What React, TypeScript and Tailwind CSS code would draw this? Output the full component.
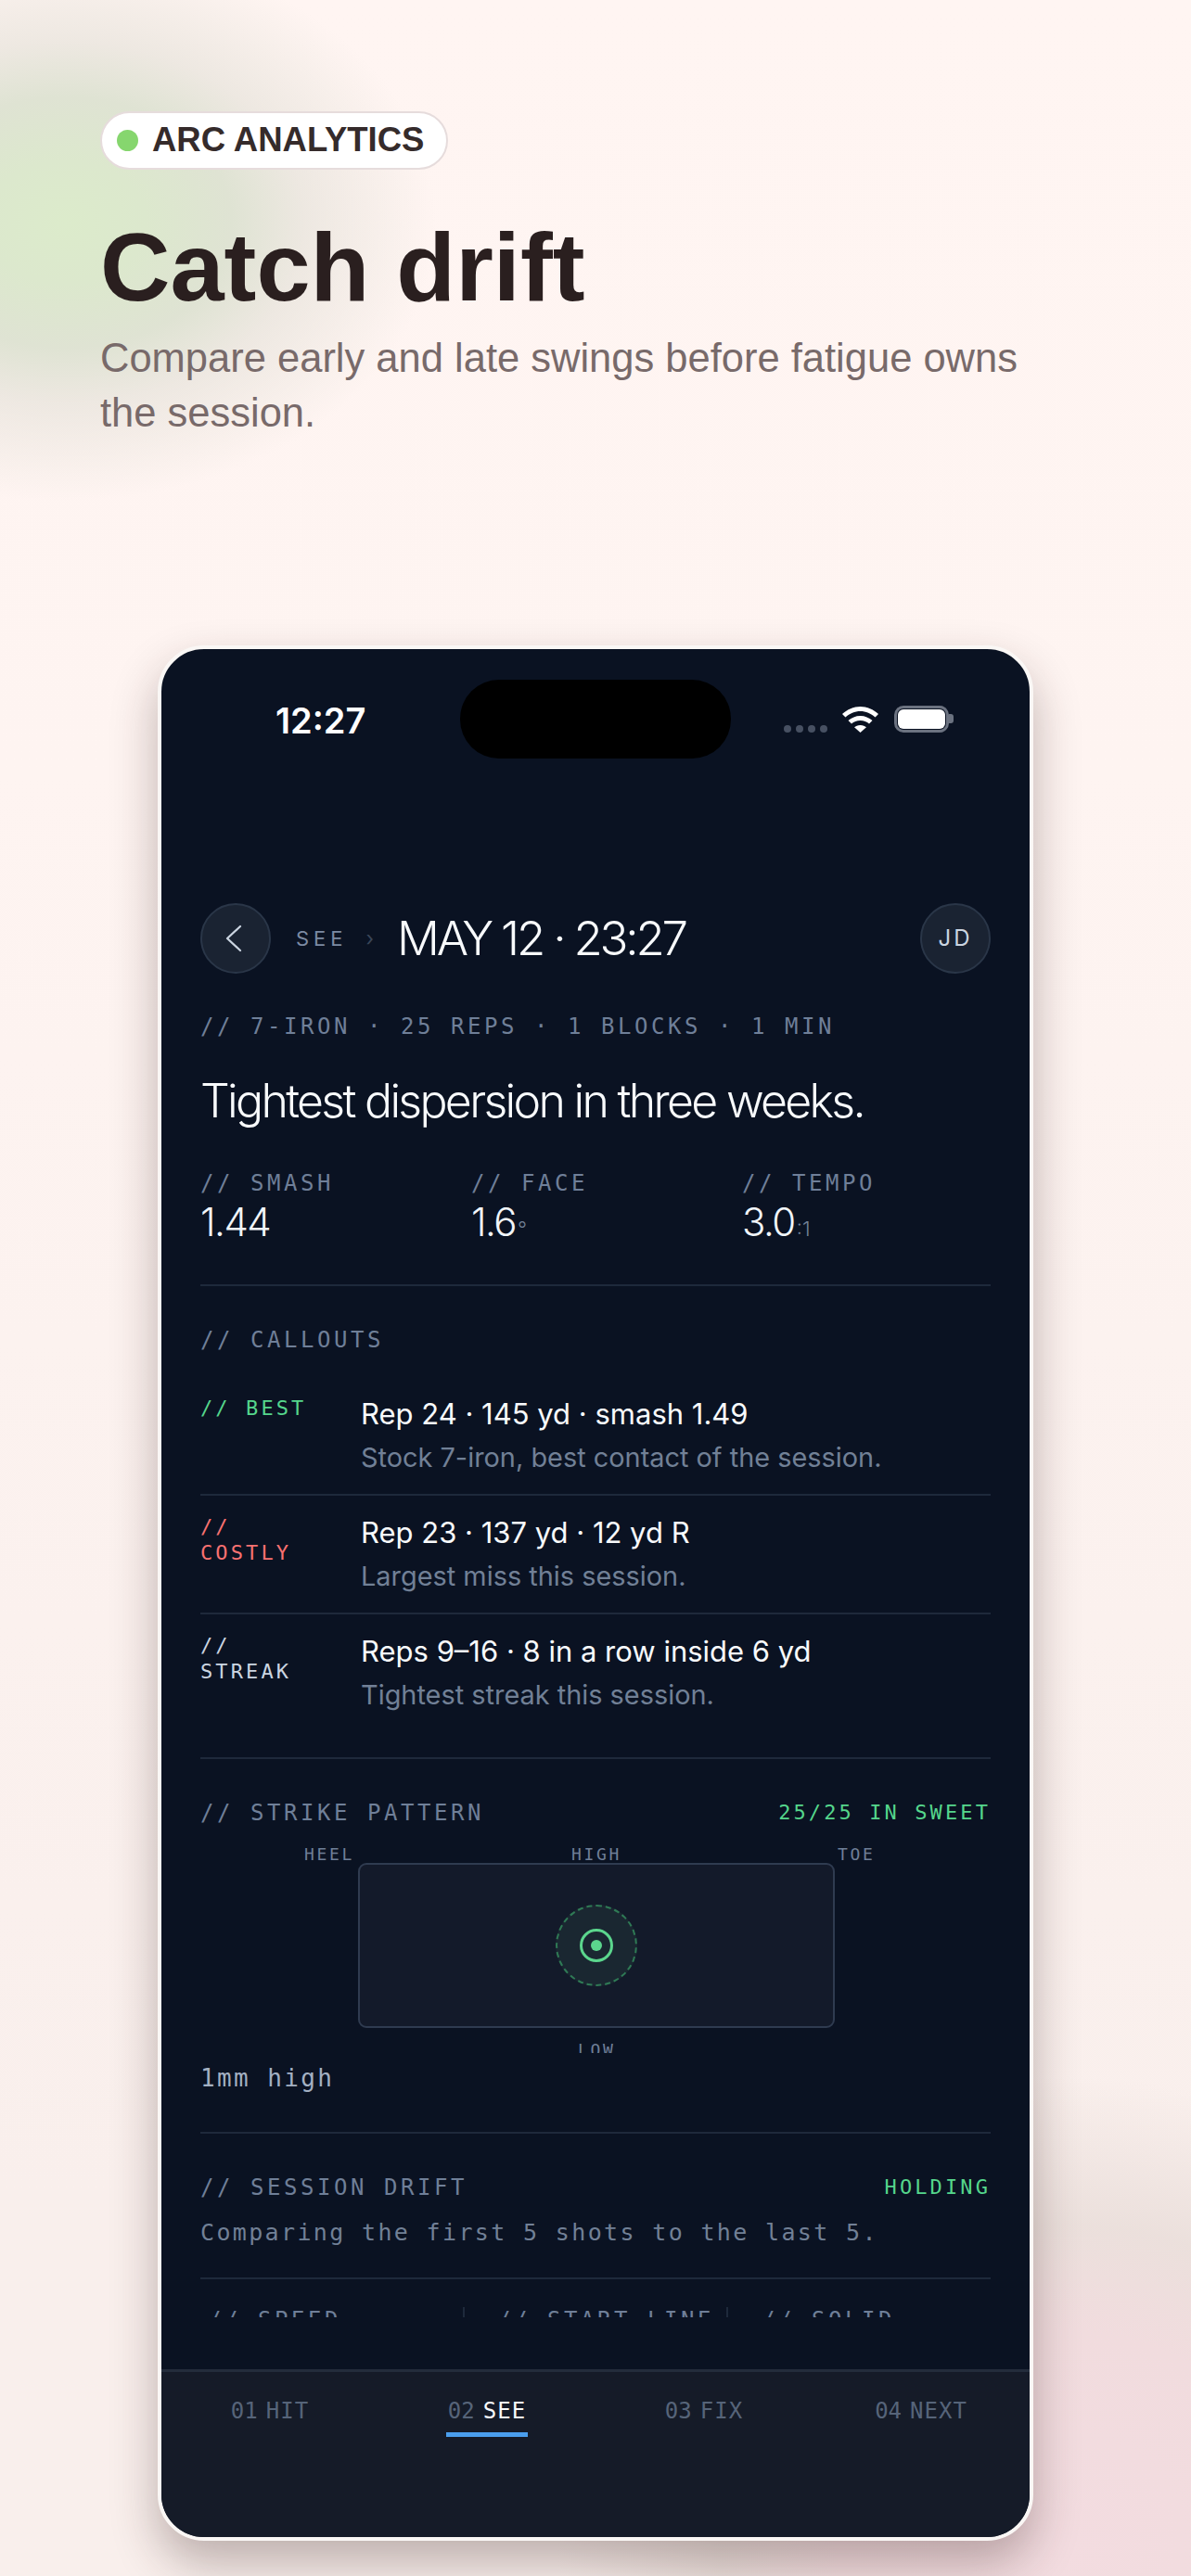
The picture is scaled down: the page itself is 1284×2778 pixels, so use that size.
import React from "react";

const mono = "font-['DejaVu_Sans_Mono',monospace]";
const inter = "font-['Inter',sans-serif]";

function Label({ children, className = "text-[#6f7f98]" }: { children: React.ReactNode; className?: string }) {
  return <div className={`${mono} h-[30px] text-[24px] leading-[34px] tracking-[3.55px] ${className}`}>{children}</div>;
}

function Accent({ children }: { children: React.ReactNode }) {
  return <div className={`${mono} h-[30px] text-[22px] leading-[34px] tracking-[3.1px] text-[#55d68c]`}>{children}</div>;
}

function Stat({ label, value, unit }: { label: string; value: string; unit?: string }) {
  return (
    <div>
      <Label>{label}</Label>
      <div className={`${inter} mt-[4px] text-[42px] leading-[50px] font-light tracking-[-1.5px] text-[#f1f5f9]`}>
        {value}
        {unit && <span className="ml-[2px] text-[22px] leading-none tracking-normal text-[#718096]">{unit}</span>}
      </div>
    </div>
  );
}

function Callout({ tag, tagColor, title, sub, border }: { tag: string; tagColor: string; title: string; sub: string; border: boolean }) {
  return (
    <div className={`flex ${border ? "h-[128px] border-b-[2px] border-[#1e293b]" : "h-[126px]"}`}>
      <div className={`${mono} w-[173px] shrink-0 pr-[40px] pt-[20px] text-[22px] leading-[28px] tracking-[3.1px] ${tagColor}`}>{tag}</div>
      <div className={`${inter} pt-[17px]`}>
        <div className="text-[31px] leading-[46px] tracking-normal text-[#f8fafc]">{title}</div>
        <div className="mt-[1px] text-[28.9px] leading-[46px] text-[#718096]">{sub}</div>
      </div>
    </div>
  );
}

function Tab({ num, name, active }: { num: string; name: string; active?: boolean }) {
  return (
    <div className="flex flex-col items-center">
      <div className={`${mono} flex items-baseline gap-[9px] text-[24px] leading-[30px]`}>
        <span className="text-[#566479]">{num}</span>
        <span className={`tracking-[1px] ${active ? "text-[#f8fafc]" : "text-[#566479]"}`}>{name}</span>
      </div>
      {active && <div className="mt-[8px] h-[5px] w-[88px] bg-[#4a9eed]" />}
    </div>
  );
}

export default function App() {
  return (
    <div className="relative h-[2778px] w-[1284px] overflow-hidden bg-[linear-gradient(180deg,#fff5f2_0%,#fef4f1_30%,#f9efec_85%,#f9efec_100%)]">
      <div className="absolute left-[-330px] top-[-60px] h-[600px] w-[800px] rounded-full bg-[radial-gradient(closest-side,#dcebcb_0%,#dce8cd_22%,#dfe3d3_45%,rgba(232,228,220,0.75)_65%,rgba(255,245,242,0)_100%)]" />
      <div className="absolute left-[600px] top-[2240px] h-[1000px] w-[1100px] rounded-full bg-[radial-gradient(closest-side,#f3dce0_0%,#f1dcde_45%,rgba(232,220,216,0.8)_68%,rgba(249,239,236,0)_100%)]" />

      <div className="relative pl-[108px] pr-[160px] pt-[120px]">
        <div className="flex h-[63px] w-[375px] items-center gap-[15px] rounded-full border-[2px] border-[#e6dcdc] bg-white pl-[16px]">
          <span className="h-[23px] w-[23px] rounded-full bg-[#86d66e]" />
          <span className="font-['Liberation_Sans',sans-serif] text-[36.5px] leading-none font-bold text-[#352b2b]">ARC ANALYTICS</span>
        </div>
        <h1 className="mt-[45px] font-['Liberation_Sans',sans-serif] text-[104.5px] leading-[120px] font-bold tracking-normal text-[#2a1f1f]">Catch drift</h1>
        <p className="mt-[9px] font-['Liberation_Sans',sans-serif] text-[43.5px] leading-[59px] text-[#786a6a]">
          Compare early and late swings before fatigue owns the session.
        </p>
      </div>

      <div className="relative mx-auto mt-[221px] h-[2044px] w-[944px] overflow-hidden rounded-[50px] border-[4px] border-[#faf7f5] bg-[#0a1222] shadow-[0_24px_50px_rgba(50,25,25,0.3)]">
        <div className="flex h-[1799px] flex-col overflow-hidden">
          <div className="relative h-[274px] shrink-0">
            <div className={`${inter} absolute left-[123px] top-[55px] text-[38px] leading-[44px] font-semibold tracking-normal text-white`}>12:27</div>
            <div className="absolute left-[322px] top-[33px] h-[85px] w-[292px] rounded-[42px] bg-black" />
            <div className="absolute left-[671px] top-[82px] flex gap-[5px]">
              <span className="h-[8px] w-[8px] rounded-full bg-[#475062]" />
              <span className="h-[8px] w-[8px] rounded-full bg-[#475062]" />
              <span className="h-[8px] w-[8px] rounded-full bg-[#475062]" />
              <span className="h-[8px] w-[8px] rounded-full bg-[#475062]" />
            </div>
            <svg className="absolute left-[734px] top-[62px]" width="39" height="28" viewBox="0 0 39 28">
              <path d="M19.5 0C12 0 5.5 3 0 8l3.5 3.5C8 7.5 13.5 5 19.5 5s11.5 2.500 16 6.500L39 8C33.5 3 27 0 19.5 0z" fill="#fff" />
              <path d="M19.5 10c-5 0-9.500 2-13 5l3.500 3.500c2.500-2.200 5.800-3.500 9.500-3.500s7 1.300 9.500 3.500l3.500-3.500c-3.500-3-8-5-13-5z" fill="#fff" />
              <path d="M19.500 20c-2.800 0-5 1-6.500 2.300L19.500 28l6.500-5.700c-1.500-1.300-3.700-2.300-6.500-2.300z" fill="#fff" />
            </svg>
            <div className="absolute left-[790px] top-[61px] h-[29px] w-[59px] rounded-[10px] border-[3px] border-[#6b7280] p-[1px]">
              <div className="h-full w-full rounded-[6px] bg-white" />
            </div>
            <div className="absolute left-[849px] top-[70px] h-[10px] w-[5px] rounded-r-[3px] bg-[#6b7280]" />
          </div>

          <div className="flex flex-col px-[42px]">
            <div className="flex h-[76px] items-center">
              <div className="flex h-[76px] w-[76px] items-center justify-center rounded-full border-[2px] border-[#2a3648] bg-[#1a2332]">
                <svg width="24" height="32" viewBox="0 0 24 32" fill="none"><path d="M17 3 3 16l14 13" stroke="#cbd5e1" strokeWidth="2.200" strokeLinecap="round" strokeLinejoin="round" /></svg>
              </div>
              <span className={`${inter} ml-[27px] text-[22px] tracking-[5px] text-[#7c8aa3]`}>SEE</span>
              <span className={`${inter} ml-[20px] text-[22px] text-[#3a4658]`}>›</span>
              <span className={`${inter} ml-[25px] text-[51px] leading-[60px] font-light tracking-[-3.2px] text-[#f8fafc]`}>MAY 12 · 23:27</span>
              <div className={`${inter} ml-auto flex h-[76px] w-[76px] items-center justify-center rounded-full border-[2px] border-[#2a3648] bg-[#1a2332] text-[24px] tracking-[3px] text-[#cbd5e1]`}>JD</div>
            </div>

            <Label className="mt-[40px] text-[#6f7f98]">// 7-IRON · 25 REPS · 1 BLOCKS · 1 MIN</Label>
            <div className={`${inter} mt-[37px] text-[50px] leading-[60px] font-light tracking-[-2.7px] text-[#f8fafc]`}>Tightest dispersion in three weeks.</div>

            <div className="mt-[42px] grid grid-cols-3 gap-[24px]">
              <Stat label="// SMASH" value="1.44" />
              <Stat label="// FACE" value="1.6" unit="°" />
              <Stat label="// TEMPO" value="3.0" unit=":1" />
            </div>

            <div className="mt-[42px] h-[2px] bg-[#1e293b]" />

            <Label className="mt-[41px] text-[#6f7f98]">// CALLOUTS</Label>

            <div className="mt-[27px] flex flex-col">
              <Callout tag="// BEST" tagColor="text-[#55d68c]" title="Rep 24 · 145 yd · smash 1.49" sub="Stock 7-iron, best contact of the session." border />
              <Callout tag="// COSTLY" tagColor="text-[#f87171]" title="Rep 23 · 137 yd · 12 yd R" sub="Largest miss this session." border />
              <Callout tag="// STREAK" tagColor="text-[#cbd5e1]" title="Reps 9–16 · 8 in a row inside 6 yd" sub="Tightest streak this session." border={false} />
            </div>

            <div className="mt-[28px] h-[2px] bg-[#1e293b]" />

            <div className="mt-[41px] flex items-center justify-between">
              <Label>// STRIKE PATTERN</Label>
              <Accent>25/25 IN SWEET</Accent>
            </div>

            <div className="relative h-[246px] overflow-hidden">
              <div className={`${mono} absolute left-[112px] top-[21px] text-[18px] leading-[22px] tracking-[2.7px] text-[#6f7f98]`}>HEEL</div>
              <div className={`${mono} absolute left-[400px] top-[21px] text-[18px] leading-[22px] tracking-[2.7px] text-[#6f7f98]`}>HIGH</div>
              <div className={`${mono} absolute left-[687px] top-[21px] text-[18px] leading-[22px] tracking-[2.7px] text-[#6f7f98]`}>TOE</div>
              <div className={`${mono} absolute left-[407px] top-[232px] text-[18px] leading-[22px] tracking-[2.7px] text-[#6f7f98]`}>LOW</div>
              <div className="absolute left-[170px] top-[41px] flex h-[178px] w-[514px] items-center justify-center rounded-[9px] border-[2px] border-[#2f3b50] bg-[#131a2a]">
                <div className="flex h-[88px] w-[88px] items-center justify-center rounded-full border-[2px] border-dashed border-[#2f7a55] bg-[#1a2731]">
                  <div className="flex h-[36px] w-[36px] items-center justify-center rounded-full border-[3px] border-[#5bd68d]">
                    <div className="h-[12px] w-[12px] rounded-full bg-[#5bd68d]" />
                  </div>
                </div>
              </div>
            </div>

            <div className={`${mono} mt-[9px] h-[35px] text-[26px] leading-[36px] tracking-[2.4px] text-[#a3b0c2]`}>1mm high</div>

            <div className="mt-[41px] h-[2px] bg-[#1e293b]" />

            <div className="mt-[41px] flex items-center justify-between">
              <Label>// SESSION DRIFT</Label>
              <Accent>HOLDING</Accent>
            </div>

            <div className={`${mono} mt-[17px] h-[34px] text-[25px] leading-[37px] tracking-[2.35px] text-[#718096]`}>Comparing the first 5 shots to the last 5.</div>

            <div className="mt-[33px] h-[2px] bg-[#1e293b]" />

            <div className="mt-[30px] flex">
              <div className="h-[40px] w-[285px] border-r-[2px] border-[#1e293b] pl-[8px]"><Label className="mt-[-3px] text-[#6f7f98]">// SPEED</Label></div>
              <div className="h-[40px] w-[284px] border-r-[2px] border-[#1e293b] pl-[35px]"><Label className="mt-[-3px] text-[#6f7f98]">// START LINE</Label></div>
              <div className="pl-[36px]"><Label className="mt-[-3px] text-[#6f7f98]">// SOLID</Label></div>
            </div>
          </div>
        </div>

        <div className="absolute inset-x-0 bottom-0 h-[181px] border-t-[3px] border-[#232c3b] bg-[#151b28]">
          <div className="grid grid-cols-4 pt-[27px]">
            <Tab num="01" name="HIT" />
            <Tab num="02" name="SEE" active />
            <Tab num="03" name="FIX" />
            <Tab num="04" name="NEXT" />
          </div>
        </div>
      </div>
    </div>
  );
}
